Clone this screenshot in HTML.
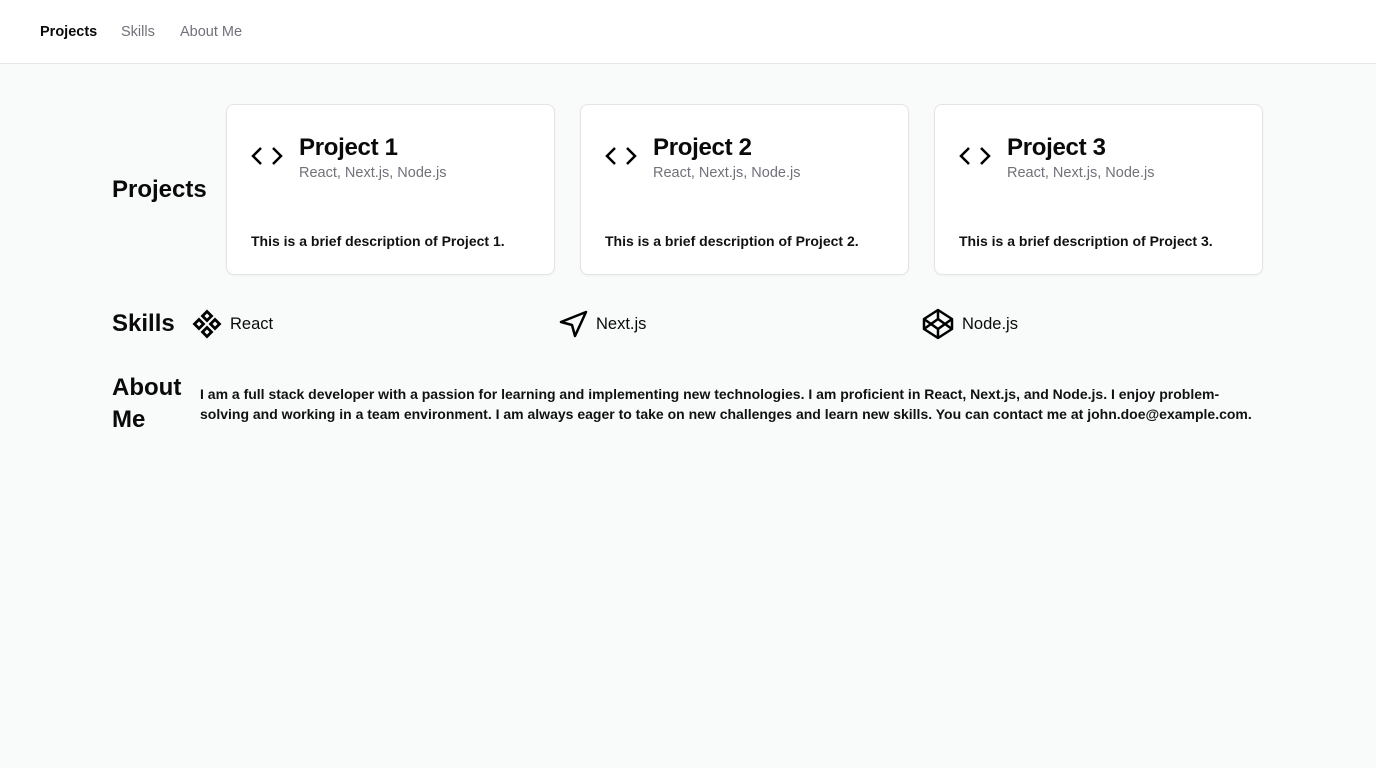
<!DOCTYPE html>
<html><head><meta charset="utf-8"><style>
*{margin:0;padding:0;box-sizing:border-box}
body{width:1376px;height:768px;background:#f9fafa;font-family:"Liberation Sans",sans-serif;color:#0a0a0a;position:relative;overflow:hidden}
header{position:absolute;left:0;top:0;width:1376px;height:64px;background:#fff;border-bottom:1px solid #e5e7eb}
nav a{position:absolute;top:24px;font-size:14.5px;color:#71717a;text-decoration:none}
.abs{position:absolute}
h2{position:absolute;font-size:24px;font-weight:bold;line-height:32px}
.card{position:absolute;top:104px;width:329px;height:171px;background:#fff;border:1px solid #e4e4e7;border-radius:8px;box-shadow:0 1px 2px rgba(0,0,0,.04)}
.card svg{position:absolute;left:24px;top:39px}
.card .t{position:absolute;left:72px;top:29px;font-size:24px;font-weight:bold;letter-spacing:-0.3px}
.card .s{position:absolute;left:72px;top:60px;font-size:14.5px;color:#71717a}
.card .d{position:absolute;left:24px;top:128px;font-size:14px;font-weight:bold;color:#111}
.sk{position:absolute;top:308px;height:32px;display:flex;align-items:center;font-size:16.5px}
.sk svg{margin-right:8px}
</style></head><body>
<header><nav><a style="left:40px;color:#0a0a0a;font-weight:bold">Projects</a><a style="left:121px">Skills</a><a style="left:180px">About Me</a></nav></header>
<h2 style="left:112px;top:174px">Projects</h2>
<div class="card" style="left:226px"><svg width="32" height="24" viewBox="0 0 32 24" fill="none" stroke="#000" stroke-width="2.5"><path d="M10 4l-8 8 8 8M22 4l8 8-8 8"/></svg><div class="t">Project 1</div><div class="s">React, Next.js, Node.js</div><div class="d">This is a brief description of Project 1.</div></div>
<div class="card" style="left:580px"><svg width="32" height="24" viewBox="0 0 32 24" fill="none" stroke="#000" stroke-width="2.5"><path d="M10 4l-8 8 8 8M22 4l8 8-8 8"/></svg><div class="t">Project 2</div><div class="s">React, Next.js, Node.js</div><div class="d">This is a brief description of Project 2.</div></div>
<div class="card" style="left:934px"><svg width="32" height="24" viewBox="0 0 32 24" fill="none" stroke="#000" stroke-width="2.5"><path d="M10 4l-8 8 8 8M22 4l8 8-8 8"/></svg><div class="t">Project 3</div><div class="s">React, Next.js, Node.js</div><div class="d">This is a brief description of Project 3.</div></div>
<h2 style="left:112px;top:308px">Skills</h2>
<div class="sk" style="left:192px"><svg width="30" height="30" viewBox="0 0 30 30" fill="none" stroke="#000" stroke-width="2.8"><path d="M15 2.5l4.5 4.5-4.5 4.5-4.5-4.5zM15 18.5l4.5 4.5-4.5 4.5-4.5-4.5zM7 10.5l4.5 4.5-4.5 4.5-4.5-4.5zM23 10.5l4.5 4.5-4.5 4.5-4.5-4.5z"/></svg>React</div>
<div class="sk" style="left:558px"><svg width="30" height="30" viewBox="0 0 30 30" fill="none" stroke="#000" stroke-width="2.5" stroke-linejoin="round"><path d="M28 3L3 13l11 3 3 11z"/></svg>Next.js</div>
<div class="sk" style="left:922px"><svg width="32" height="32" viewBox="0 0 32 32" fill="none" stroke="#000" stroke-width="2.5" stroke-linejoin="round"><path d="M16 2l14 9v10l-14 9-14-9V11zM16 2v9M16 21v9M2 11l14 10 14-10M2 21l14-10 14 10"/></svg>Node.js</div>
<h2 style="left:112px;top:372px;width:80px">About Me</h2>
<div class="abs" style="left:200px;top:384px;width:1068px;font-size:14px;font-weight:bold;line-height:20px;color:#111">I am a full stack developer with a passion for learning and implementing new technologies. I am proficient in React, Next.js, and Node.js. I enjoy problem-solving and working in a team environment. I am always eager to take on new challenges and learn new skills. You can contact me at john.doe@example.com.</div>
</body></html>
